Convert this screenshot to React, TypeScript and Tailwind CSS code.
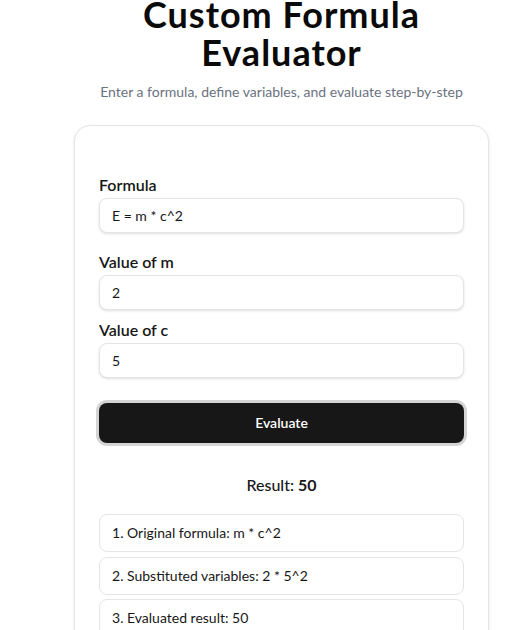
import { useState } from "react"

const inputClass =
  "w-full h-[35px] rounded-lg border border-[#e5e5e5] bg-white px-3 text-sm text-[#171717] shadow-sm outline-none"

export default function App() {
  const [formula, setFormula] = useState("E = m * c^2")
  const [m, setM] = useState("2")
  const [c, setC] = useState("5")
  const result = Number(m) * Math.pow(Number(c), 2)

  const steps = [
    "Original formula: m * c^2",
    `Substituted variables: ${m} * ${c}^2`,
    `Evaluated result: ${result}`,
  ]

  return (
    <div className="w-[514px] h-[630px] overflow-hidden bg-white font-['Lato','Noto_Sans',sans-serif] text-[#171717]">
      <div className="w-[563px] flex flex-col items-center">
        <h1 className="-mt-[5px] max-w-[415px] text-center text-4xl font-bold leading-[38px] tracking-[1px] text-[#0a0a0a]">
          Custom Formula Evaluator
        </h1>
        <p className="mt-[11px] text-sm leading-5 text-[#6b7280]">
          Enter a formula, define variables, and evaluate step-by-step
        </p>

        <div className="mt-[23px] w-[415px] rounded-2xl border border-[#e5e5e5] bg-white px-6 pt-[47px] pb-6 shadow-sm">
          <div>
            <label className="mb-px block text-base font-semibold leading-6">Formula</label>
            <input value={formula} onChange={(e) => setFormula(e.target.value)} className={inputClass} />
          </div>

          <div className="mt-[17px] space-y-2">
            <div>
              <label className="mb-px block text-base font-semibold leading-6">Value of m</label>
              <input value={m} onChange={(e) => setM(e.target.value)} className={inputClass} />
            </div>
            <div>
              <label className="mb-px block text-base font-semibold leading-6">Value of c</label>
              <input value={c} onChange={(e) => setC(e.target.value)} className={inputClass} />
            </div>
          </div>

          <button className="mt-[25px] h-10 w-full rounded-lg bg-[#171717] text-sm font-semibold text-white ring-[3px] ring-[#d4d4d4]">
            Evaluate
          </button>

          <div className="mt-[30px] text-center text-base font-medium leading-6">
            Result: <span className="font-bold">{result}</span>
          </div>

          <div className="mt-[17px] space-y-[4.5px]">
            {steps.map((s, i) => (
              <div key={i} className="rounded-lg border border-[#e5e5e5] px-3 py-2 text-sm leading-5">
                {i + 1}. {s}
              </div>
            ))}
          </div>
        </div>
      </div>
    </div>
  )
}
